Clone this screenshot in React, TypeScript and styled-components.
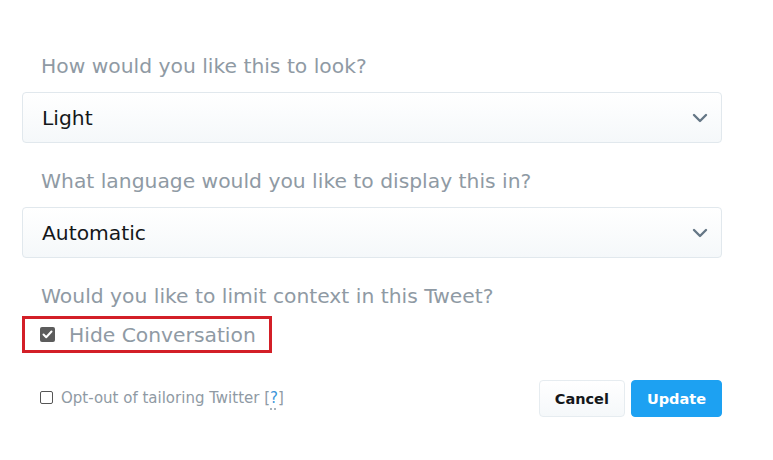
import React from 'react';
import styled, { createGlobalStyle } from 'styled-components';

const GlobalStyle = createGlobalStyle`
  html, body {
    margin: 0;
    padding: 0;
    background: #fff;
  }
  body {
    font-family: "DejaVu Sans", Verdana, sans-serif;
  }
`;

const Chevron = () => (
  <svg width="16" height="10" viewBox="0 0 16 10">
    <path d="M2 2 L8 8 L14 2" fill="none" stroke="#657786" strokeWidth="2.4" strokeLinecap="round" strokeLinejoin="round" />
  </svg>
);

const App: React.FC = () => {
  return (
    <Page>
      <GlobalStyle />
      <Form>
        <Label>How would you like this to look?</Label>
        <Select>
          <span>Light</span>
          <Chevron />
        </Select>

        <Label>What language would you like to display this in?</Label>
        <Select>
          <span>Automatic</span>
          <Chevron />
        </Select>

        <Label>Would you like to limit context in this Tweet?</Label>
        <Highlight>
          <CheckBox checked />
          <CheckLabel>Hide Conversation</CheckLabel>
        </Highlight>

        <Footer>
          <OptOut>
            <CheckBox small />
            <OptText>
              Opt-out of tailoring Twitter [<Help>?</Help>]
            </OptText>
          </OptOut>
          <Buttons>
            <Button>Cancel</Button>
            <Button primary>Update</Button>
          </Buttons>
        </Footer>
      </Form>
    </Page>
  );
};

const CheckBox = ({ checked, small }: { checked?: boolean; small?: boolean }) => (
  <Box checked={checked} small={small}>
    {checked && (
      <svg width="11" height="9" viewBox="0 0 11 9">
        <path d="M1.5 4.5 L4.2 7.2 L9.5 1.5" fill="none" stroke="#fff" strokeWidth="2" strokeLinecap="round" strokeLinejoin="round" />
      </svg>
    )}
  </Box>
);

const Page = styled.div`
  width: 773px;
  height: 460px;
  background: #fff;
`;

const Form = styled.div`
  width: 700px;
  padding: 54px 0 0 22px;
  display: flex;
  flex-direction: column;
`;

const Label = styled.div`
  font-size: 20.3px;
  line-height: 24px;
  color: #8f9aa4;
  padding-left: 19px;
  margin-bottom: 14px;
`;

const Select = styled.div`
  height: 51px;
  box-sizing: border-box;
  border: 1px solid #e1e8ed;
  border-radius: 4px;
  background: linear-gradient(#ffffff, #f5f8fa);
  display: flex;
  align-items: center;
  justify-content: space-between;
  padding: 0 13px 0 19px;
  font-size: 20.3px;
  color: #14171a;
  margin-bottom: 26px;
`;

const Highlight = styled.div`
  width: 250px;
  height: 37px;
  box-sizing: border-box;
  border: 3px solid #d31f27;
  display: flex;
  align-items: center;
  gap: 14px;
  padding-left: 15px;
  margin-top: -6px;
`;

const Box = styled.span<{ checked?: boolean; small?: boolean }>`
  width: ${(p) => (p.small ? 13 : 15)}px;
  height: ${(p) => (p.small ? 13 : 15)}px;
  box-sizing: border-box;
  border-radius: 2px;
  display: inline-flex;
  align-items: center;
  justify-content: center;
  flex-shrink: 0;
  background: ${(p) => (p.checked ? '#5c5c5c' : '#fff')};
  border: ${(p) => (p.checked ? 'none' : '1.5px solid #555')};
`;

const CheckLabel = styled.span`
  font-size: 20.3px;
  color: #8f9aa4;
`;

const Footer = styled.div`
  display: flex;
  justify-content: space-between;
  align-items: center;
  margin-top: 27px;
`;

const OptOut = styled.div`
  display: flex;
  align-items: center;
  gap: 8px;
  padding-left: 18px;
  margin-top: -2px;
`;

const OptText = styled.span`
  font-size: 15px;
  color: #8f9aa4;
`;

const Help = styled.span`
  color: #3b94d9;
  text-decoration: underline dotted #8f9aa4;
  text-underline-offset: 6px;
`;

const Buttons = styled.div`
  display: flex;
  gap: 6px;
`;

const Button = styled.button<{ primary?: boolean }>`
  height: 37px;
  padding: 0 15px;
  border-radius: 4px;
  font-family: "DejaVu Sans", Verdana, sans-serif;
  font-weight: bold;
  font-size: 14.5px;
  border: 1px solid ${(p) => (p.primary ? '#1da1f2' : '#e6ecf0')};
  background: ${(p) => (p.primary ? '#1da1f2' : 'linear-gradient(#fff, #f5f8fa)')};
  color: ${(p) => (p.primary ? '#fff' : '#14171a')};
`;

export default App;
